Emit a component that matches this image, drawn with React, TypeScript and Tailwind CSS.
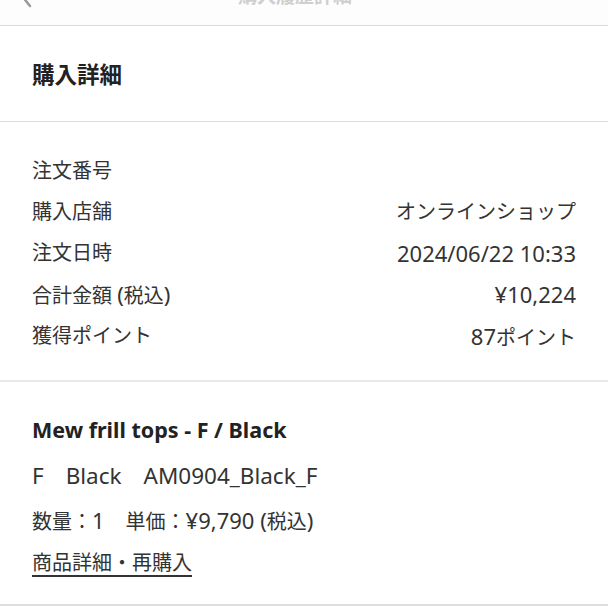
import React from "react";

const font = { fontFamily: '"Noto Sans", "Noto Sans CJK JP", sans-serif' };

// latin runs render larger than the kana/kanji in the source screenshot
const L = ({ children }: { children: React.ReactNode }) => (
  <span className="text-[22px]">{children}</span>
);

const rows: { label: React.ReactNode; value: React.ReactNode }[] = [
  { label: "注文番号", value: "" },
  { label: "購入店舗", value: "オンラインショップ" },
  { label: "注文日時", value: <L>2024/06/22 10:33</L> },
  {
    label: (
      <>
        合計金額 <L>(</L>税込<L>)</L>
      </>
    ),
    value: <L>¥10,224</L>,
  },
  {
    label: "獲得ポイント",
    value: (
      <>
        <L>87</L>ポイント
      </>
    ),
  },
];

const TopBar = (): React.ReactElement => (
  <div className="h-[26px] overflow-hidden border-b border-[#dcdcdc] bg-[#fdfdfd]">
    <div className="-mt-[18px] flex items-center px-[18px]">
      <svg width="16" height="24" viewBox="0 0 16 24" className="shrink-0">
        <path
          d="M12 2 L4 12 L12 22"
          fill="none"
          stroke="#9a9a9a"
          strokeWidth="2.5"
          strokeLinecap="round"
        />
      </svg>
      <div className="flex-1 text-center pr-[34px] text-[19px] font-bold text-[#cfcfcf]">
        購入履歴詳細
      </div>
    </div>
  </div>
);

const App = (): React.ReactElement => {
  return (
    <div className="w-[608px] h-[608px] overflow-hidden bg-white text-[#333]" style={font}>
      <TopBar />
      <div className="h-[96px] flex items-center px-8 pt-[2px] border-b border-[#dcdcdc]">
        <h1 className="text-[22.5px] font-bold text-[#222]">購入詳細</h1>
      </div>
      <div className="pt-[28px] pb-[23px] px-8 border-b-2 border-[#e8e8e8]">
        {rows.map((row, i) => (
          <div
            key={i}
            className="h-[41.4px] flex items-center justify-between text-[20px] leading-none"
          >
            <span>{row.label}</span>
            <span>{row.value}</span>
          </div>
        ))}
      </div>
      <div className="pt-[25px] pb-[21px] px-8 border-b-2 border-[#dedede]">
        <div className="h-[46px] flex items-center text-[21.5px] font-bold text-[#222]">
          Mew frill tops - F / Black
        </div>
        <div className="h-[45px] flex items-center pt-[2px] gap-[22px] text-[22.5px] leading-none">
          <span>F</span>
          <span>Black</span>
          <span>AM0904_Black_F</span>
        </div>
        <div className="h-[43px] flex items-center pt-[2px] gap-[21px] text-[20px] leading-none">
          <span>
            数量：<L>1</L>
          </span>
          <span>
            単価：<L>¥9,790 (</L>税込<L>)</L>
          </span>
        </div>
        <div className="h-[42px] flex items-center pt-[2px] text-[20px]">
          <a className="underline decoration-[1.5px] underline-offset-[5px] text-[#333]">
            商品詳細・再購入
          </a>
        </div>
      </div>
    </div>
  );
};

export default App;
